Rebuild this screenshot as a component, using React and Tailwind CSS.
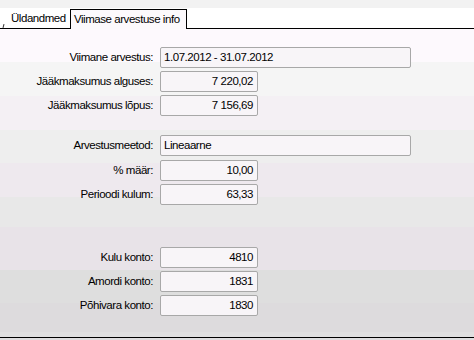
import React from "react";

const font = { fontFamily: '"Liberation Sans", Arial, sans-serif' };

function Field({ value, wide }) {
  return (
    <div
      className={`flex h-[21px] items-center rounded-[2px] border border-[#a8a8a8] bg-[#f8f5f8] ${
        wide ? "w-[251px] pl-[3px]" : "w-[98px] justify-end pr-[4px]"
      }`}
    >
      <span>{value}</span>
    </div>
  );
}

function Row({ label, value, wide }) {
  return (
    <div className="flex items-center">
      <div className="w-[154px] pr-[1px] text-right">{label}</div>
      <div className="ml-[6px]">
        <Field value={value} wide={wide} />
      </div>
    </div>
  );
}

export default function App() {
  return (
    <div
      className="relative h-[340px] w-[474px] overflow-hidden bg-[#dfdddf] text-[11.5px] tracking-[-0.45px] text-black"
      style={font}
    >
      <div className="h-[8px] bg-[#f2f2f2]" />
      <div className="flex h-[21px] items-end border-b border-black bg-white">
        <div className="relative h-[20px] w-[70px]">
          <span className="absolute bottom-0 left-[3px] h-[4px] w-px rotate-[15deg] bg-[#333]" />
          <span className="absolute left-[11px] top-[3px] leading-[14px]">Üldandmed</span>
        </div>
        <div className="-mb-px flex h-[20px] w-[117px] items-start border border-b-0 border-black bg-[#fcf9fc] pl-[3px] pt-[2px] leading-[14px]">
          Viimase arvestuse info
        </div>
      </div>
      <div className="h-[308px] bg-[linear-gradient(to_bottom,#fdf9fd_0px,#fdf9fd_33px,#f5f5f5_33px,#f5f5f5_67px,#f4f0f4_67px,#f4f0f4_101px,#eeeeee_101px,#eeeeee_134px,#eee9ee_134px,#eee9ee_168px,#e8e8e8_168px,#e8e8e8_198px,#e8e3e8_198px,#e8e3e8_241px,#dedede_241px,#dedede_274px,#dddbdd_274px,#dddbdd_303px,#e0dfe0_303px)] pt-[18px]">
        <div className="flex flex-col gap-[3px]">
          <Row label="Viimane arvestus:" value="1.07.2012 - 31.07.2012" wide />
          <Row label="Jääkmaksumus alguses:" value="7 220,02" />
          <Row label="Jääkmaksumus lõpus:" value="7 156,69" />
        </div>
        <div className="mt-[19px] flex flex-col gap-[3px]">
          <div className="mb-[1px]">
            <Row label="Arvestusmeetod:" value="Lineaarne" wide />
          </div>
          <Row label="% määr:" value="10,00" />
          <Row label="Perioodi kulum:" value="63,33" />
        </div>
        <div className="mt-[42px] flex flex-col gap-[3px]">
          <Row label="Kulu konto:" value="4810" />
          <Row label="Amordi konto:" value="1831" />
          <Row label="Põhivara konto:" value="1830" />
        </div>
      </div>
      <div className="h-px bg-black" />
    </div>
  );
}
